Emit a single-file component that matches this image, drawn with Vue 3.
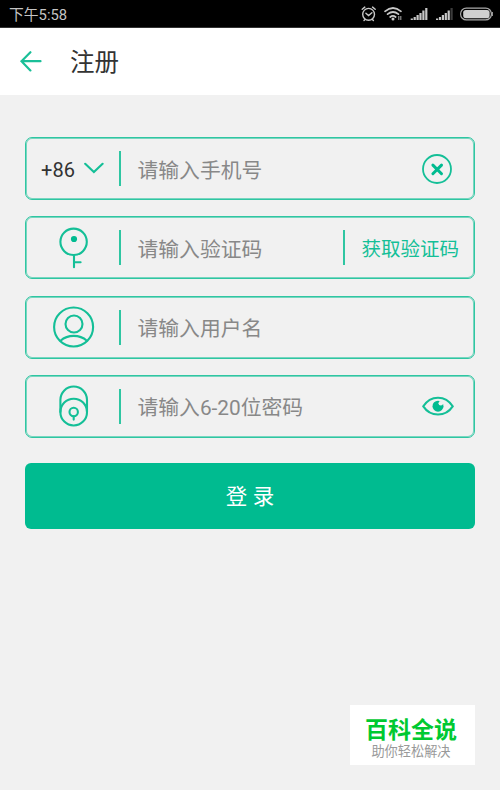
<!-- Register page -->
<template>
  <div class="page">
    <div class="status-bar">
      <span class="clock">下午5:58</span>
      <svg class="status-icons" width="136" height="20" viewBox="0 0 136 20">
        <g fill="none" stroke="#c8c8c8" stroke-width="1.4" stroke-linecap="round">
          <circle cx="8.6" cy="10.3" r="5.9" />
          <path d="M5.9 9.2l2.7 2.4 3.3-2.8M2.2 5.3l2.6-2.2M15.2 5.3l-2.6-2.2M5 15.6l-1 1M12.4 15.6l1 1" />
          <path d="M25 7.3q8-6.6 16 0M27.6 10.2q5.4-4.4 10.8 0M30.2 13q2.8-2.2 5.4 0" stroke-width="1.7" />
        </g>
        <circle cx="33" cy="15" r="1.5" fill="#c8c8c8" />
        <path d="M38.8 16v-4M40.8 12v4" stroke="#999" stroke-width="1.1" />
        <g fill="#c8c8c8">
          <rect v-for="(h, i) in bars" :key="i" :x="50.7 + i * 2.9" :y="16 - h" width="2.2" :height="h" />
          <rect
            v-for="(h, i) in bars"
            :key="'b' + i"
            :x="76 + i * 2.9"
            :y="16 - h"
            width="2.2"
            :height="h"
            :fill="i === 5 ? '#3c3c3c' : '#c8c8c8'"
          />
        </g>
        <rect x="100.6" y="4.1" width="30.8" height="11.8" rx="5.7" fill="none" stroke="#aaa" stroke-width="1.2" />
        <rect x="103.2" y="6" width="26.4" height="8.2" rx="2.6" fill="#d0d0d0" />
        <path d="M132.2 8v4" stroke="#aaa" stroke-width="1.4" />
      </svg>
    </div>

    <header class="nav-bar">
      <svg class="back" width="22" height="22" viewBox="0 0 22 22">
        <path d="M10.4 1.2L1.5 10.2l8.9 9.2M1.5 10.2h19" />
      </svg>
      <h1 class="title">注册</h1>
    </header>

    <main class="form">
      <div v-for="field in fields" :key="field.type" class="field">
        <div class="prefix">
          <template v-if="field.type === 'phone'">
            <span class="area-code">+86</span>
            <svg class="arrow" width="20" height="12" viewBox="0 0 20 12">
              <path d="M1.2 1.8l8.7 8.3 8.7-8.3" />
            </svg>
          </template>
          <svg v-else-if="field.type === 'code'" class="icon" width="42" height="42" viewBox="0 0 42 42">
            <circle cx="20.6" cy="14.8" r="13.2" />
            <circle class="solid" cx="21" cy="12" r="3.1" />
            <path d="M21 28v12.2M21 35.3h6.6" />
          </svg>
          <svg v-else-if="field.type === 'user'" class="icon" width="42" height="42" viewBox="0 0 42 42">
            <circle cx="20.6" cy="21" r="19.5" />
            <circle cx="21" cy="18" r="8.5" />
            <path d="M7.5 34.7c7.4-6.4 19-6.4 26.4 0" />
          </svg>
          <svg v-else class="icon" width="42" height="42" viewBox="0 0 42 42">
            <rect x="7.4" y="1.5" width="26.6" height="39" rx="13.3" />
            <path d="M7.4 27a13.3 13.3 0 0 1 26.6 0" />
            <circle cx="20.7" cy="27" r="4.2" />
            <path d="M20.7 31.2v3.4" />
          </svg>
        </div>
        <i class="divider"></i>
        <span class="placeholder">{{ field.placeholder }}</span>

        <svg v-if="field.type === 'phone'" class="clear" width="32" height="32" viewBox="0 0 32 32">
          <circle cx="16" cy="16" r="14" />
          <path d="M11.9 12.1l8.6 8.6M20.5 12.1l-8.6 8.6" />
        </svg>
        <template v-if="field.type === 'code'">
          <i class="divider"></i>
          <span class="get-code">获取验证码</span>
        </template>
        <svg v-if="field.type === 'password'" class="eye" width="32" height="20" viewBox="0 0 32 20">
          <path d="M1.3 10.3C8.5-1.2 23.5-1.2 30.7 10.3C23.5 21.2 8.5 21.2 1.3 10.3z" />
          <circle class="solid" cx="16" cy="10.2" r="5.5" />
          <circle class="glint" cx="18.8" cy="7.2" r="2.3" />
        </svg>
      </div>

      <button class="submit">登 录</button>
    </main>

    <div class="watermark">
      <strong>百科全说</strong>
      <span>助你轻松解决</span>
    </div>
  </div>
</template>

<script setup>
import { ref } from 'vue';

// heights of the signal strength bars
const bars = [1.5, 3, 5, 7, 9.5, 12];

const fields = ref([
  { type: 'phone', placeholder: '请输入手机号' },
  { type: 'code', placeholder: '请输入验证码' },
  { type: 'user', placeholder: '请输入用户名' },
  { type: 'password', placeholder: '请输入6-20位密码' }
]);
</script>

<style>
body {
  margin: 0;
  background: #f1f1f1;
}
</style>

<style scoped>
.page {
  position: relative;
  width: 500px;
  height: 790px;
  overflow: hidden;
  background: #f1f1f1;
  font-family: Roboto, 'Noto Sans CJK SC', sans-serif;
}

svg {
  display: block;
  flex: none;
}

/* status bar */
.status-bar {
  display: flex;
  align-items: center;
  justify-content: space-between;
  box-sizing: border-box;
  height: 28px;
  padding: 0 4px 0 9px;
  background: #000;
  border-bottom: 1px solid #333;
}

.clock {
  padding-top: 2px;
  color: #c4c4c4;
  font-size: 14.8px;
  line-height: 26px;
}

/* nav bar */
.nav-bar {
  display: flex;
  align-items: center;
  height: 67px;
  padding-left: 20px;
  background: #fff;
}

.back {
  fill: none;
  stroke: #1abf98;
  stroke-width: 2.2;
  stroke-linecap: round;
}

.title {
  margin: 0 0 0 28px;
  padding-top: 3px;
  color: #333;
  font-size: 24.5px;
  font-weight: 400;
  line-height: 36px;
}

/* form */
.form {
  padding: 42px 25px 0;
}

.field {
  display: flex;
  align-items: center;
  box-sizing: border-box;
  height: 63px;
  margin-bottom: 16.33px;
  padding-right: 16px;
  border: 1px solid #2fc6a2;
  border-radius: 7px;
  box-shadow: inset 0 0 0 1px rgba(0, 187, 144, 0.5);
}

.prefix {
  display: flex;
  align-items: center;
  justify-content: center;
  flex: none;
  width: 93px;
}

.area-code {
  margin-right: 9px;
  padding-top: 2px;
  color: #333;
  font-size: 20px;
}

.arrow {
  margin-top: -1px;
}

.icon,
.arrow,
.clear,
.eye {
  fill: none;
  stroke: #14bf97;
  stroke-width: 2.1;
  stroke-linecap: round;
}

.icon {
  margin-left: 2px;
}

.solid {
  fill: #00bb90;
  stroke: none;
}

.glint {
  fill: #f1f1f1;
  stroke: none;
}

.divider {
  flex: none;
  width: 2px;
  height: 35px;
  background: #2fc6a2;
}

.placeholder {
  flex: 1;
  margin-left: 16.5px;
  padding-top: 4px;
  color: #888;
  font-size: 20.8px;
  line-height: 32px;
  white-space: nowrap;
}

.clear {
  margin-right: 5px;
  stroke-width: 1.8;
}

.clear path {
  stroke: #00bb90;
  stroke-width: 3;
}

.eye {
  margin-right: 4px;
}

.get-code {
  margin-left: 16.5px;
  margin-right: -1px;
  padding-top: 4px;
  color: #14bf97;
  font-size: 19.5px;
  line-height: 32px;
}

.submit {
  display: block;
  width: 450px;
  height: 66.5px;
  margin-top: 25px;
  padding: 0 0 3px;
  border: 0;
  border-radius: 6px;
  background: #00bb90;
  color: #fff;
  font-family: inherit;
  font-size: 21.5px;
}

/* floating badge */
.watermark {
  position: absolute;
  right: 25px;
  bottom: 25px;
  display: flex;
  flex-direction: column;
  align-items: center;
  box-sizing: border-box;
  width: 125px;
  height: 60px;
  padding: 12px 3px 0 0;
  background: #fff;
}

.watermark strong {
  color: #00c931;
  font-size: 23px;
  font-weight: 700;
  line-height: 28px;
}

.watermark span {
  margin-top: -2px;
  color: #999;
  font-size: 13.2px;
  line-height: 17px;
}
</style>
